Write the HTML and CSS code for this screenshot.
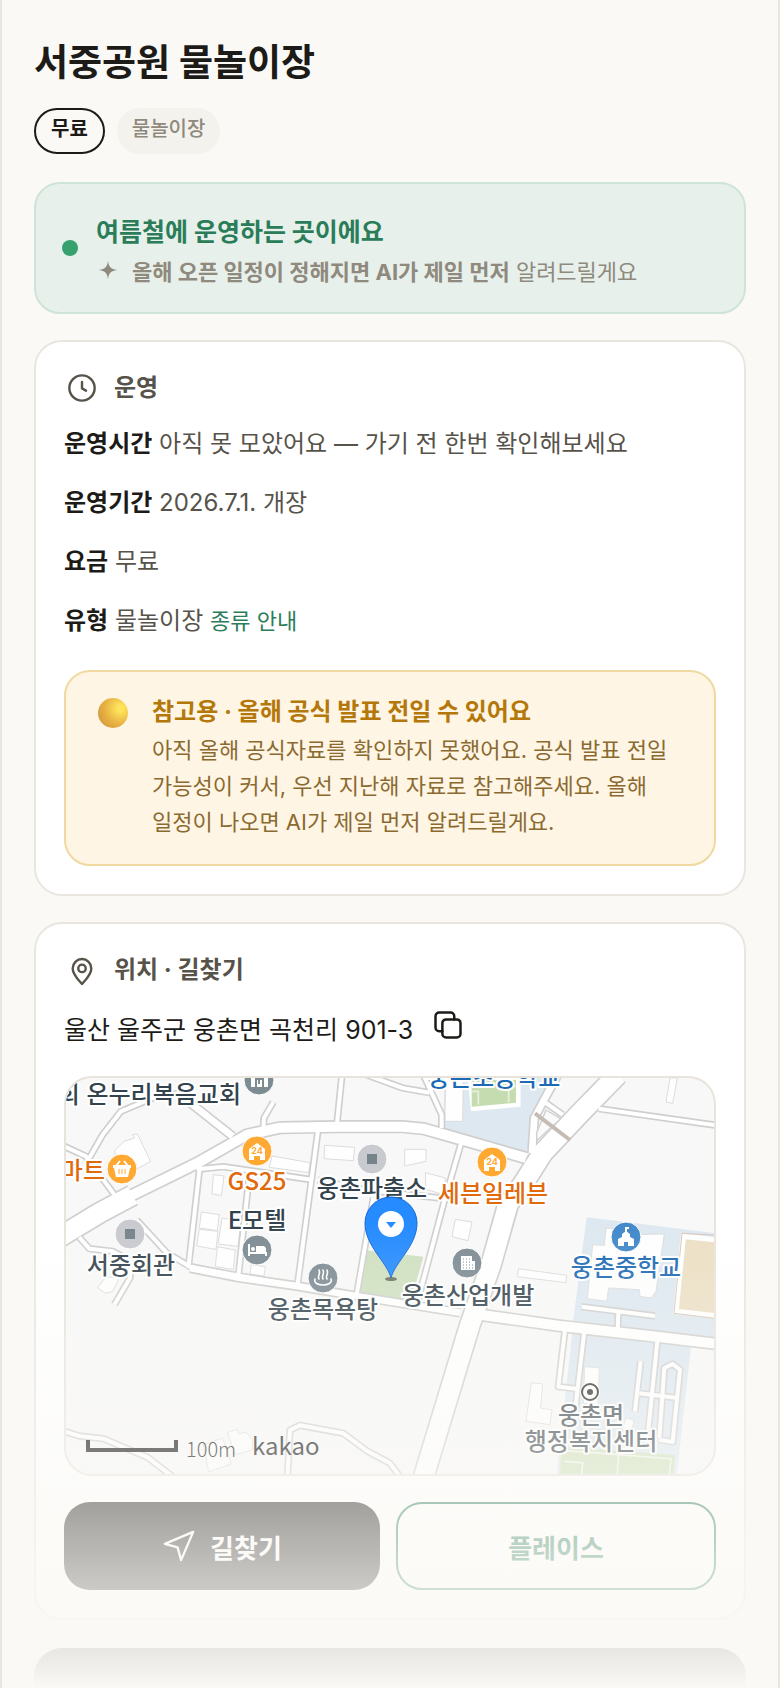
FILE: index.html
```
<!DOCTYPE html>
<html lang="ko">
<head>
    <meta charset="UTF-8">
    <meta name="viewport" content="width=device-width, initial-scale=1.0">
    <title>서중공원 물놀이장</title>
    <link rel="stylesheet" href="styles.css">
</head>
<body>
    <main class="page">
        <header class="place-header">
            <h1>서중공원 물놀이장</h1>
            <div class="tags">
                <span class="tag tag-free">무료</span>
                <span class="tag tag-type">물놀이장</span>
            </div>
        </header>

        <section class="season">
            <span class="season-dot"></span>
            <div class="season-body">
                <p class="season-title">여름철에 운영하는 곳이에요</p>
                <p class="season-sub">
                    <svg class="sparkle" viewBox="0 0 24 24" fill="currentColor" aria-hidden="true">
                        <path d="M12 3C12.8 8.6 14.6 11.2 21 12C14.6 12.8 12.8 15.4 12 21C11.2 15.4 9.4 12.8 3 12C9.4 11.2 11.2 8.6 12 3Z"></path>
                    </svg>
                    <span><b>올해 오픈 일정이 정해지면 AI가 제일 먼저</b> 알려드릴게요</span>
                </p>
            </div>
        </section>

        <section class="card">
            <h2>
                <svg class="icon" viewBox="0 0 24 24" fill="none" stroke="currentColor" stroke-width="1.8" stroke-linecap="round" stroke-linejoin="round" aria-hidden="true">
                    <circle cx="12" cy="12" r="9.500"></circle>
                    <path d="M12 7.5v4.8l3 1.7"></path>
                </svg>
                운영
            </h2>
            <ul class="facts">
                <li><b>운영시간</b> 아직 못 모았어요 — 가기 전 한번 확인해보세요</li>
                <li><b>운영기간</b> 2026.7.1. 개장</li>
                <li><b>요금</b> 무료</li>
                <li><b>유형</b> 물놀이장 <a href="#types">종류 안내</a></li>
            </ul>
            <div class="note">
                <span class="note-ball"></span>
                <div>
                    <p class="note-title">참고용 · 올해 공식 발표 전일 수 있어요</p>
                    <p class="note-text">아직 올해 공식자료를 확인하지 못했어요. 공식 발표 전일 가능성이 커서, 우선 지난해 자료로 참고해주세요. 올해 일정이 나오면 AI가 제일 먼저 알려드릴게요.</p>
                </div>
            </div>
        </section>

        <section class="card card-location">
            <h2>
                <svg class="icon" viewBox="0 0 24 24" fill="none" stroke="currentColor" stroke-width="1.8" stroke-linecap="round" stroke-linejoin="round" aria-hidden="true">
                    <path d="M12 22.500c-3.200-3.500-7-7.300-7-11.700a7 7 0 0 1 14 0c0 4.400-3.800 8.200-7 11.700z"></path>
                    <circle cx="12" cy="10.800" r="2.800"></circle>
                </svg>
                위치 · 길찾기
            </h2>
            <div class="address">
                <span>울산 울주군 웅촌면 곡천리 901-3</span>
                <button class="copy" type="button" aria-label="주소 복사">
                    <svg viewBox="0 0 24 24" fill="none" stroke="currentColor" stroke-width="2" stroke-linecap="round" stroke-linejoin="round" aria-hidden="true">
                        <rect x="7.500" y="7.500" width="14.500" height="14.500" rx="3"></rect>
                        <path d="M7.500 17H5a3 3 0 0 1-3-3V5a3 3 0 0 1 3-3h9a3 3 0 0 1 3 3v2.500"></path>
                    </svg>
                </button>
            </div>

            <div class="map">
                <svg viewBox="0 0 648 396" preserveAspectRatio="xMidYMid slice" role="img" aria-label="서중공원 물놀이장 지도">
                    <defs>
                        <g id="lanes">
                            <path d="M-5 205L60 235L145 350"></path>
                            <path d="M70 240L110 170L165 100L260 60L367 40"></path>
                            <path d="M622 72L594 120L592 150"></path>
                            <path d="M828 -10L812 146"></path>
                            <path d="M757 150L694 625"></path>
                            <path d="M402 260L367 570"></path>
                            <path d="M550 290L517 595"></path>
                            <path d="M392 274L472 266L742 306"></path>
                            <path d="M212 426L302 524L372 566L512 592L694 624"></path>
                            <path d="M40 478L70 512L140 520L195 550L192 600L145 680"></path>
                            <path d="M1187 190L1132 380L1055 670"></path>
                            <path d="M922 360L872 650"></path>
                            <path d="M755 306L900 336L1140 362"></path>
                            <path d="M900 -10L1010 30L1090 44"></path>
                            <path d="M1072 -10L1127 110V150"></path>
                            <path d="M1598 92L1950 142"></path>
                            <path d="M1440 75L1490 110"></path>
                            <path d="M-5 1060L40 1074L112 1082L245 1138L325 1200"></path>
                            <path d="M664 1200L672 1056L702 1042L832 1066L902 1118L972 1156L1005 1200"></path>
                            <path d="M1547 686L1767 714M1657 700L1655 760"></path>
                            <path d="M1497 755L1477 926L1530 932M1555 760L1527 1000"></path>
                            <path d="M1775 780L1747 1056M1724 850L1707 1000M1720 946L1835 960"></path>
                            <path d="M1780 1080L1795 870L1820 858L1842 875L1820 1092L1780 1085"></path>
                        </g>
                        <g id="streets">
                            <path d="M367 70L500 175"></path>
                            <path d="M372 570L512 598L692 624L882 656L1182 704"></path>
                            <path d="M1475 -10L1405 120L1398 225"></path>
                        </g>
                        <path id="avenue" d="M100 400L392 256L542 171L642 149L812 146H1010L1072 152L1192 186L1380 240M1212 706L1492 745L1772 776L1950 797"></path>
                        <path id="highway" d="M1655 -10L1542 106L1430 225L1370 320L1327 376L1275 560L1212 740L1072 1200M-40 490L100 405L200 352"></path>
                        <g id="store">
                            <path d="M-8 9v-11l8-6l8 6v11h-5v-4h-6v4z" fill="#fff"></path>
                        </g>
                    </defs>

                    <g transform="scale(.33333)">
                        <g fill="#dde8f0">
                            <path d="M1135 0H1450L1380 225L1132 152Z"></path>
                            <path d="M1562 418L1950 466V790L1520 740Z"></path>
                            <path d="M1520 750L1877 790L1832 1195H1472Z"></path>
                        </g>
                        <path d="M1205 0H1364V86L1215 100Z" fill="#fff"></path>
                        <path d="M1217 0H1350V74L1217 86Z" fill="#c5dcb0"></path>
                        <path d="M1217 40h20v40M1350 25h-22v48" fill="none" stroke="#e6f0dc" stroke-width="5"></path>
                        <path d="M1487 1106L1827 1131L1822 1195H1482Z" fill="#cfe0ba"></path>
                        <path d="M1495 1150L1550 1154L1547 1190M1658 1120L1654 1190M1500 1118L1815 1142L1810 1190" fill="none" stroke="#eff6e8" stroke-width="5"></path>
                        <path d="M897 516L1072 536L1034 672L880 650Z" fill="#cfe0c0"></path>
                        <path d="M1852 475L1955 486V714L1830 700Z" fill="#ecdfc4" stroke="#fff" stroke-width="16"></path>
                        <path d="M1955 472L1848 466L1824 706L1955 722" fill="none" stroke="#d9c3b4" stroke-width="3"></path>

                        <g fill="#fefefe" stroke="#dcdcdc" stroke-width="3">
                            <path d="M174 190L206 180L200 170L214 168L254 250L215 272L180 230L150 240L146 218L166 198Z"></path>
                            <path d="M776 202L866 208L862 248L774 242Z"></path>
                            <path d="M618 234L732 254L728 284L610 268Z"></path>
                            <path d="M442 290L474 294L466 352L438 348Z"></path>
                            <path d="M406 402L460 410L454 458L400 450Z"></path>
                            <path d="M400 454L456 460L450 514L392 504Z"></path>
                            <path d="M468 420L525 430L516 505L456 498Z"></path>
                            <path d="M454 506L508 516L502 574L448 566Z"></path>
                            <path d="M556 560L598 566L594 594L552 588Z"></path>
                            <path d="M1016 214H1080V250L1016 264Z"></path>
                            <path d="M1078 284L1138 300L1134 350L1080 334Z"></path>
                            <path d="M1168 424L1218 432L1206 488L1158 476Z"></path>
                            <path d="M1140 -10H1192L1190 130H1136Z"></path>
                            <path d="M1812 0H1834L1820 76L1800 72Z"></path>
                            <path d="M1358 572L1502 592L1500 614L1354 596Z"></path>
                            <path d="M1620 450L1680 456V470L1795 468L1770 640L1755 660L1722 655L1720 635L1628 630L1622 670L1564 662L1580 500L1615 502Z"></path>
                            <path d="M1396 914L1430 918L1424 990L1458 996L1452 1040L1380 1030Z"></path>
                            <path d="M1556 866L1600 870L1596 980L1552 976Z"></path>
                            <path d="M1680 1020L1705 1028L1695 1060L1668 1056Z"></path>
                            <path d="M412 1100L470 1080L496 1158L428 1182Z"></path>
                            <path d="M484 1064L512 1054L520 1068L540 1062L560 1084L558 1116L508 1130Z"></path>
                            <path d="M120 596L160 600L140 640L120 646L94 630Z"></path>
                        </g>

                        <g fill="none" stroke-linejoin="round">
                            <g stroke="#cfcfcf">
                                <use href="#lanes" stroke-width="22"></use>
                                <use href="#streets" stroke-width="30"></use>
                                <use href="#avenue" stroke-width="40"></use>
                                <use href="#highway" stroke-width="68"></use>
                            </g>
                            <g stroke="#fff">
                                <use href="#lanes" stroke-width="12"></use>
                                <use href="#streets" stroke-width="20"></use>
                                <use href="#avenue" stroke-width="30"></use>
                                <use href="#highway" stroke-width="58"></use>
                            </g>
                        </g>
                        <path d="M1440 96L1484 122L1412 188V165Z" fill="#fafafa" stroke="#cfcfcf" stroke-width="4"></path>
                        <path d="M1407 106L1512 186" stroke="#c5bdb4" stroke-width="12"></path>
                    </g>

                    <g class="poi">
                        <circle cx="193" cy="2" r="15" fill="#7d8b93"></circle>
                        <path d="M185-4h4v13h-4zM191-6h5v15h-5zM198-4h4v13h-4z" fill="#fff"></path>
                        <path d="M193-3v9M190 1h6" stroke="#7d8b93" stroke-width="2"></path>

                        <circle cx="56" cy="91" r="15" fill="#ffa832"></circle>
                        <path d="M47 87h18v3h-1l-2 9h-12l-2-9h-1z" fill="#fff"></path>
                        <path d="M50 88l4-5M62 88l-4-5" stroke="#fff" stroke-width="2"></path>
                        <path d="M53 91v5M56 91v5M59 91v5" stroke="#ffa832"></path>

                        <circle cx="191" cy="73" r="15" fill="#ffa832"></circle>
                        <use href="#store" x="191" y="73"></use>
                        <text class="poi-24" x="191" y="76">24</text>
                        <circle cx="426" cy="84" r="15" fill="#ffa832"></circle>
                        <use href="#store" x="426" y="84"></use>
                        <text class="poi-24" x="426" y="87">24</text>

                        <circle cx="306" cy="81" r="15" fill="#c9cacf"></circle>
                        <path d="M301 76h10v10h-10z" fill="#76838a"></path>
                        <circle cx="64" cy="156" r="15" fill="#c9cacf"></circle>
                        <path d="M59 151h10v10h-10z" fill="#76838a"></path>

                        <circle cx="191" cy="172" r="15" fill="#7d8b93"></circle>
                        <path d="M183 166v12M183 175h17v3" fill="none" stroke="#fff" stroke-width="2"></path>
                        <path d="M190 168h8l2 2v4h-10z" fill="#fff"></path>
                        <circle class="plain" cx="187" cy="171" r="2" fill="#fff"></circle>

                        <circle cx="257" cy="200" r="15" fill="#7d8b93"></circle>
                        <path d="M249 201c-3 8 19 8 16 0M253 201c-2-3 2-5 0-9M257 201c-2-3 2-5 0-9M261 201c-2-3 2-5 0-9" fill="none" stroke="#fff" stroke-width="1.600" stroke-linecap="round"></path>

                        <circle cx="401" cy="185" r="15" fill="#7d8b93"></circle>
                        <path d="M395 178h11v5h3v9h-14z" fill="#fff"></path>
                        <path d="M397 181h8M397 184h8M397 187h10M397 190h10" stroke="#7d8b93" stroke-dasharray="1 2"></path>

                        <circle cx="560" cy="159" r="15" fill="#4288ca"></circle>
                        <path d="M552 168v-7l4-2v-3l4-3l4 3v3l4 2v7h-6v-4h-4v4z" fill="#fff"></path>
                        <path d="M560 154v-4h3" fill="none" stroke="#fff" stroke-width="2"></path>

                        <circle class="plain" cx="524" cy="314" r="10" fill="#fff"></circle>
                        <circle class="ring" cx="524" cy="314" r="8" fill="#fff"></circle>
                        <circle class="plain" cx="524" cy="314" r="3" fill="#222"></circle>
                    </g>

                    <g class="labels">
                        <text class="end" x="175" y="25">회 온누리복음교회</text>
                        <text class="shop end" x="39" y="101">마트</text>
                        <text class="shop" x="191" y="112">GS25</text>
                        <text x="191" y="151">E모텔</text>
                        <text x="306" y="119">웅촌파출소</text>
                        <text class="shop" x="427" y="124">세븐일레븐</text>
                        <text x="65" y="196">서중회관</text>
                        <text x="257" y="240">웅촌목욕탕</text>
                        <text x="402" y="226">웅촌산업개발</text>
                        <text class="school" x="428" y="8">웅촌초등학교</text>
                        <text class="school" x="560" y="198">웅촌중학교</text>
                        <text class="office" x="525" y="346">웅촌면</text>
                        <text class="office" x="525" y="372">행정복지센터</text>
                    </g>

                    <ellipse cx="325" cy="201" rx="6" ry="2" fill="#6b7560"></ellipse>
                    <path d="M325 200C321 184 299 168 299 145a26 26 0 0 1 52 0C351 168 329 184 325 200Z" fill="#258bff" stroke="#1668d8"></path>
                    <circle cx="325" cy="146" r="13" fill="#fff"></circle>
                    <path d="M320 144h10l-5 6z" fill="#258bff"></path>

                    <path d="M22 362v10h88v-10" fill="none" stroke="#000" stroke-width="4"></path>
                    <text class="scale" x="120" y="379">100m</text>
                    <text class="logo" x="186" y="377">kakao</text>
                </svg>
            </div>

            <div class="actions">
                <button class="btn btn-primary" type="button">
                    <svg viewBox="0 0 24 24" fill="none" stroke="currentColor" stroke-width="1.600" stroke-linejoin="round" aria-hidden="true">
                        <path d="M22 2L2 10.500l9 2.500L13.500 22z"></path>
                    </svg>
                    길찾기
                </button>
                <button class="btn btn-outline" type="button">플레이스</button>
            </div>
        </section>

        <div class="next-bar"></div>
        <div class="fade"></div>
    </main>
</body>
</html>
```

FILE: styles.css
```
* {
    margin: 0;
    padding: 0;
    box-sizing: border-box;
}

body {
    font-family: Inter, 'Noto Sans CJK KR', sans-serif;
    font-size: 24px;
    color: #1c1b18;
    background: #faf9f5;
}

b {
    font-weight: 700;
}

.page {
    position: relative;
    height: 100vh;
    overflow: hidden;
    padding: 32px 32px 0;
    border-left: 2px solid #e8e6df;
    border-right: 2px solid #e8e6df;
}

h1 {
    font-size: 37px;
    font-weight: 700;
    line-height: 62px;
}

.tags {
    display: flex;
    gap: 12px;
    margin: 14px 0 28px;
}

.tag {
    height: 46px;
    padding: 0 15px;
    border-radius: 23px;
    font-size: 20px;
    line-height: 42px;
}

.tag-free {
    border: 2px solid #1c1b18;
    font-weight: 700;
    line-height: 38px;
}

.tag-type {
    background: #f3f2ed;
    color: #8f897e;
    font-weight: 500;
}

/* season banner */
.season {
    display: flex;
    align-items: center;
    gap: 18px;
    padding: 20px 26px;
    margin-bottom: 26px;
    border: 2px solid #cde4d7;
    border-radius: 26px;
    background: #e7f0ea;
}

.season-dot {
    flex: none;
    width: 16px;
    height: 16px;
    border-radius: 50%;
    background: #35a26d;
}

.season-body {
    padding-top: 8px;
}

.season-title {
    color: #2b7d59;
    font-size: 25px;
    font-weight: 700;
    line-height: 40px;
}

.season-sub {
    display: flex;
    gap: 12px;
    color: #8f897e;
    font-size: 22px;
    line-height: 40px;
}

.sparkle {
    width: 24px;
    height: 24px;
    margin-top: 6px;
}

/* cards */
.card {
    padding: 28px;
    margin-bottom: 26px;
    border: 2px solid #e8e6df;
    border-radius: 28px;
    background: #fff;
}

.card-location {
    margin-bottom: 28px;
}

h2 {
    display: flex;
    align-items: center;
    gap: 14px;
    color: #57534a;
    font-size: 24px;
    font-weight: 700;
    line-height: 36px;
}

.icon {
    width: 36px;
    height: 36px;
    padding: 2px;
}

.facts {
    list-style: none;
    margin: 8px 0 20px;
    color: #57534a;
}

.facts li {
    line-height: 59px;
}

.facts b {
    color: #1c1b18;
}

.facts a {
    color: #2b7d59;
    font-size: 22px;
    line-height: 1;
    text-decoration: none;
}

.note {
    display: flex;
    gap: 24px;
    padding: 20px 32px 24px;
    border: 2px solid #efd9a0;
    border-radius: 26px;
    background: #fff5e4;
}

.note-ball {
    flex: none;
    width: 30px;
    height: 30px;
    margin-top: 6px;
    border-radius: 50%;
    background: radial-gradient(circle at 75% 35%, #ffe35c 10%, #e9b444 50%, #d9a03c 75%, #d98060 100%);
}

.note-title {
    color: #b4780a;
    font-size: 24px;
    font-weight: 700;
    line-height: 40px;
}

.note-text {
    color: #8a6a30;
    font-size: 22px;
    line-height: 36px;
    word-break: keep-all;
}

.address {
    display: flex;
    align-items: flex-start;
    gap: 20px;
    margin-top: 22px;
    font-size: 25px;
    line-height: 40px;
}

.copy {
    height: 30px;
    border: none;
    background: none;
    color: #1c1b18;
    cursor: pointer;
}

.copy svg {
    display: block;
    width: 30px;
    height: 30px;
}

.map {
    height: 400px;
    margin: 26px 0;
    overflow: hidden;
    border: 2px solid #e8e4dc;
    border-radius: 28px;
    background: #f8f8f8;
}

.map svg {
    display: block;
    width: 100%;
    height: 100%;
}

.poi circle {
    stroke: #fff;
}

.poi .plain {
    stroke: none;
}

.poi .ring {
    stroke: #222;
    stroke-width: 2px;
}

.poi-24 {
    fill: #ffa832;
    font-size: 9px;
    font-weight: 700;
    text-anchor: middle;
}

.labels {
    font-family: 'Noto Sans CJK KR', sans-serif;
    font-size: 24px;
    font-weight: 500;
    fill: #33434d;
    stroke: #fff;
    stroke-width: 4px;
    stroke-linejoin: round;
    paint-order: stroke;
    text-anchor: middle;
}

.labels .end {
    text-anchor: end;
}

.labels .shop {
    fill: #e06a0c;
}

.labels .school {
    fill: #1c69b4;
}

.labels .office {
    fill: #38444c;
}

.scale {
    fill: #000;
    font-family: 'Noto Sans CJK KR', sans-serif;
    font-size: 20px;
    font-weight: 300;
}

.logo {
    fill: #000;
    font-family: 'Noto Sans CJK KR', sans-serif;
    font-size: 24px;
}

.actions {
    display: flex;
    gap: 16px;
}

.btn {
    display: flex;
    flex: 1;
    align-items: center;
    justify-content: center;
    gap: 14px;
    height: 88px;
    border: none;
    border-radius: 26px;
    font-family: inherit;
    font-size: 26px;
    font-weight: 700;
    cursor: pointer;
}

.btn svg {
    width: 34px;
    height: 34px;
}

.btn-primary {
    background: #1c1b18;
    color: #fff;
}

.btn-outline {
    border: 2px solid #2b7d59;
    background: #fff;
    color: #2b7d59;
}

.next-bar {
    height: 120px;
    border-radius: 28px;
    background: #1c1b18;
}

/* the page dissolves into the background at the bottom */
.fade {
    position: absolute;
    right: 0;
    bottom: 0;
    left: 0;
    height: 468px;
    margin: 0 -2px;
    background: linear-gradient(rgba(250, 249, 245, 0), #faf9f5);
    pointer-events: none;
}
```
